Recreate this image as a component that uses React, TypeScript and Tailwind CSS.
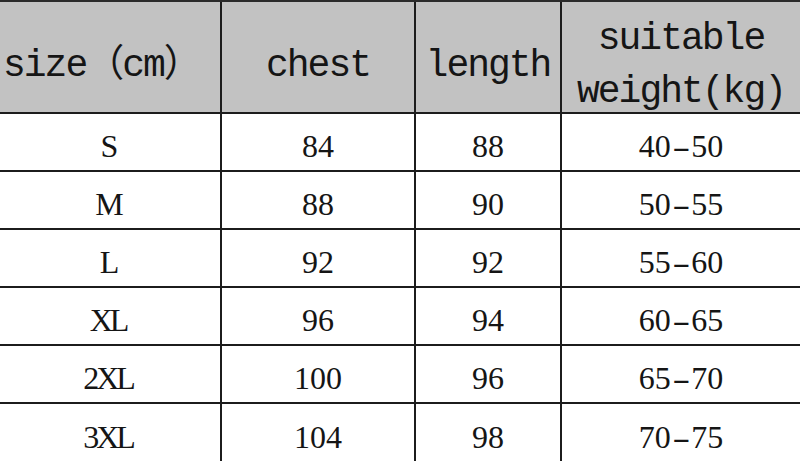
import React from "react";

const rows = [
  ["S", "84", "88", "40-50"],
  ["M", "88", "90", "50-55"],
  ["L", "92", "92", "55-60"],
  ["XL", "96", "94", "60-65"],
  ["2XL", "100", "96", "65-70"],
  ["3XL", "104", "98", "70-75"],
];

function Range({ v }: { v: string }) {
  const [a, b] = v.split("-");
  return (
    <span>
      {a}
      <span className="inline-block mx-[5px] scale-x-[1.7]">-</span>
      {b}
    </span>
  );
}

export default function App() {
  const hcell =
    "flex items-center justify-center bg-[#c2c2c2] border-b-2 border-[#1c1c1c] h-[112px] pt-[16px] text-[38px] tracking-[-2px] text-[#151515] font-['Liberation_Mono','Noto_Sans_CJK_SC',monospace]";
  return (
    <div className="w-[800px] h-[461px] bg-white overflow-hidden">
      <div className="grid grid-cols-[222px_194px_146px_238px] border-t-2 border-[#2a2a2a]">
        <div className={hcell + " border-r-2 justify-start pl-[3px] whitespace-nowrap"}>size（cm）</div>
        <div className={hcell + " border-r-2"}>chest</div>
        <div className={hcell + " border-r-2"}>length</div>
        <div className={hcell}>
          <div className="text-center leading-[53px]">
            <div>suitable</div>
            <div>weight(kg)</div>
          </div>
        </div>
        {rows.map((r, i) => {
          const last = i === rows.length - 1;
          const base =
            "flex items-center justify-center h-[58px] pt-[8px] text-[32px] text-[#151515] border-[#1c1c1c] font-['Liberation_Serif','Noto_Sans_CJK_SC',serif] " +
            (last ? "" : "border-b-2 ");
          return (
            <React.Fragment key={r[0]}>
              <div className={base + "border-r-2 tracking-[-3px] pr-[4px]"}>{r[0]}</div>
              <div className={base + "border-r-2"}>{r[1]}</div>
              <div className={base + "border-r-2"}>{r[2]}</div>
              <div className={base}>
                <Range v={r[3]} />
              </div>
            </React.Fragment>
          );
        })}
      </div>
    </div>
  );
}
